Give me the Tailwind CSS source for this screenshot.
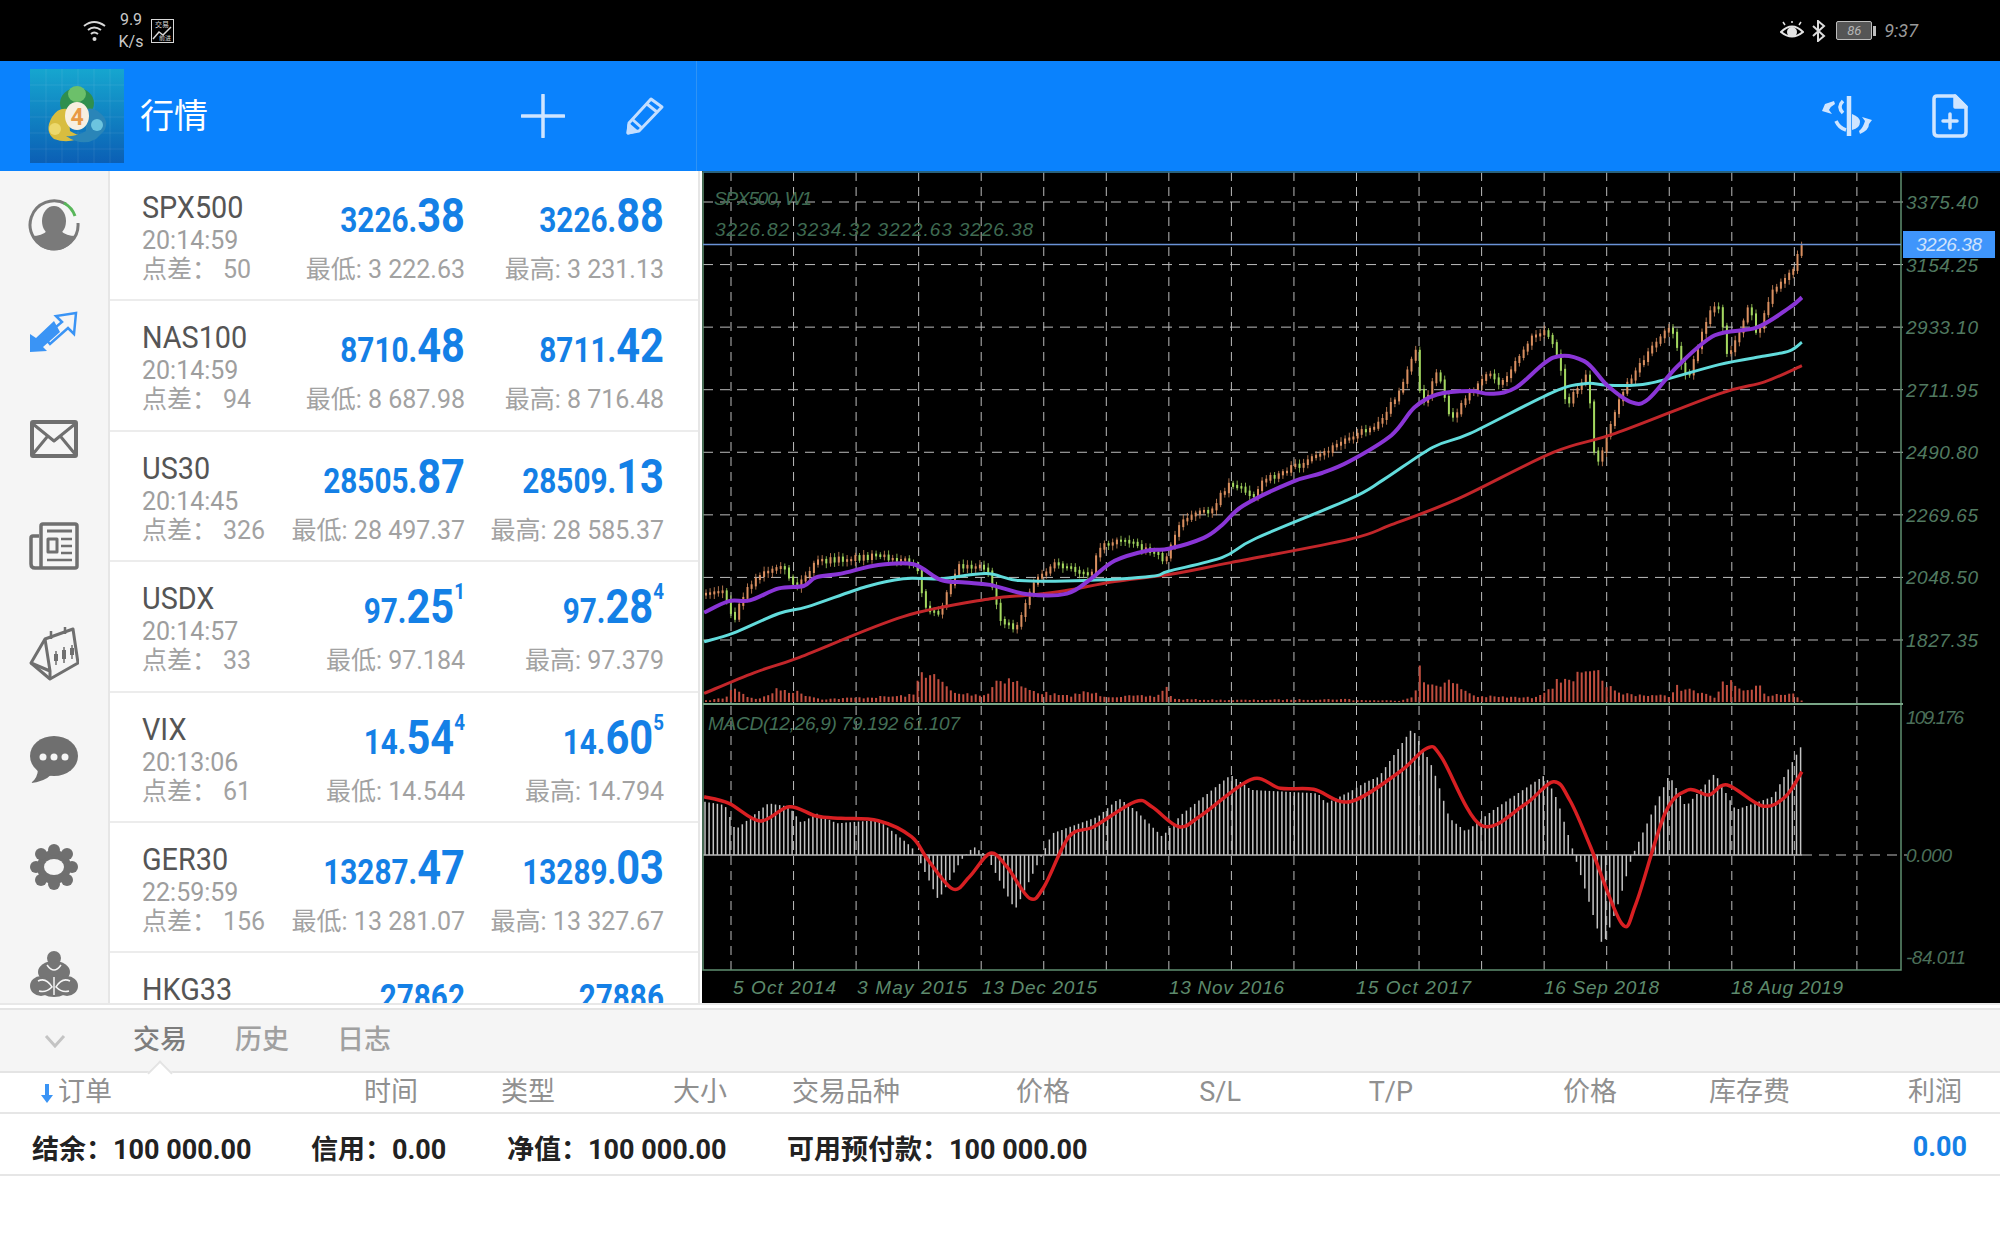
<!DOCTYPE html>
<html lang="zh-CN">
<head>
    <meta charset="UTF-8">
    <meta name="viewport" content="width=device-width, initial-scale=1.0">
    <title>MetaTrader 4 行情</title>
    <script src="https://cdn.jsdelivr.net/npm/@tailwindcss/browser@4"></script>
</head>
<body class="w-[2000px] h-[1250px] overflow-hidden bg-white font-[Roboto,'Noto_Sans_CJK_SC',sans-serif]">

    <!-- Status bar -->
    <div class="h-[61px] bg-black flex items-center text-[#c9c9c9] relative">
        <div class="flex items-center pl-[83px]">
            <svg width="26" height="24" viewBox="0 0 26 24" fill="none" stroke="#d8d8d8" stroke-width="2">
                <path d="M1 7 Q11 -1 22 7"/><path d="M5 11 Q11 6 18 11"/><path d="M8 15 Q11 12 15 15"/>
                <circle cx="11.500" cy="20" r="2" fill="#d8d8d8" stroke="none"/>
            </svg>
            <div class="w-[30px] ml-[7px] text-[16px] leading-[22px] text-center"><div>9.9</div><div>K/s</div></div>
            <svg class="ml-[5px]" width="23" height="24" viewBox="0 0 23 24" fill="none" stroke="#d8d8d8">
                <rect x="0.500" y="0.500" width="22" height="23"/>
                <text x="11" y="8" font-size="7" fill="#d8d8d8" stroke="none" text-anchor="middle">交易</text>
                <path d="M2 20 L8 13 L12 16 L20 8" stroke-width="1.500"/>
                <text x="14" y="21" font-size="6" fill="#d8d8d8" stroke="none" text-anchor="middle">前进</text>
            </svg>
        </div>
        <div class="ml-auto flex items-center pr-[82px]">
            <svg width="24" height="20" viewBox="0 0 24 20" fill="none" stroke="#e4e4e4" stroke-width="2">
                <path d="M1 11 Q12 0 23 11 Q12 20 1 11Z"/><circle cx="12" cy="11" r="4" fill="#e4e4e4"/>
                <path d="M5 4 L3 1 M12 2 V0 M19 4 L21 1" stroke-width="1.500"/>
            </svg>
            <svg class="ml-[8px]" width="14" height="22" viewBox="0 0 14 22" fill="none" stroke="#dcdcdc" stroke-width="2">
                <path d="M1 6 L12 16 L6 21 V1 L12 6 L1 16"/>
            </svg>
            <div class="ml-[10px] w-[36px] h-[19px] border border-[#bdbdbd] rounded-[2px] bg-[#555] text-[13px] leading-[17px] italic text-center text-[#b5b5b5]">86</div>
            <div class="w-[3px] h-[10px] bg-[#bdbdbd] ml-[1px]"></div>
            <div class="ml-[8px] text-[18px] italic text-[#9a9a9a]">9:37</div>
        </div>
    </div>

    <!-- Title bar -->
    <div class="h-[110px] bg-[#0a82fd] flex items-center">
        <div class="w-[697px] h-full flex items-center border-r border-[#2f93f5]">
            <svg class="ml-[30px]" width="94" height="94" viewBox="0 0 94 94">
                <defs>
                    <linearGradient id="tile" x1="0" y1="0" x2="0" y2="1">
                        <stop offset="0" stop-color="#16a6cf"/><stop offset="1" stop-color="#0b5fb5"/>
                    </linearGradient>
                </defs>
                <rect width="94" height="94" fill="url(#tile)"/>
                <path d="M16 0V94M32 0V94M48 0V94M64 0V94M80 0V94M0 16H94M0 32H94M0 48H94M0 64H94M0 80H94" stroke="#ffffff" stroke-opacity=".08"/>
                <ellipse cx="47" cy="34" rx="17" ry="15" fill="#2f8f4e"/>
                <ellipse cx="47" cy="25" rx="9" ry="8" fill="#6cc06a"/>
                <path d="M24 70 Q14 62 22 48 Q28 38 38 40 L40 62 Q50 68 56 66 Q40 76 24 70Z" fill="#d8bd3f"/>
                <circle cx="25" cy="60" r="6" fill="#ecd86c"/>
                <path d="M74 62 Q80 52 70 44 Q64 38 56 40 L56 62 Q46 68 36 67 Q52 78 66 70Z" fill="#2a85b8"/>
                <circle cx="67" cy="56" r="6" fill="#6cc4df"/>
                <ellipse cx="47" cy="47" rx="12" ry="14" fill="#f7efe0"/>
                <text x="47" y="56" font-size="23" font-weight="700" fill="#e89a45" text-anchor="middle">4</text>
            </svg>
            <div class="ml-[16px] text-[34px] text-white">行情</div>
            <svg class="ml-auto" width="44" height="44" viewBox="0 0 44 44" stroke="#cfe5ff" stroke-width="3.500" stroke-linecap="round">
                <path d="M22 1V43M1 22H43"/>
            </svg>
            <svg class="ml-[60px] mr-[31px]" width="40" height="40" viewBox="0 0 40 40" fill="none" stroke="#c3deff" stroke-width="3" stroke-linejoin="round">
                <path d="M3 37 L4 27 L26 3 L37 11 L14 35 Z"/><path d="M8 24 L17 32 M22 8 L32 16"/>
                <path d="M3 37 L4 29 L11 35 Z" fill="#c3deff"/>
            </svg>
        </div>
        <div class="ml-auto flex items-center pr-[32px]">
            <svg width="52" height="40" viewBox="0 0 52 40" fill="none" stroke="#cfe5ff" stroke-width="4">
                <path d="M28 0V40" stroke-width="4.500"/>
                <path d="M22 5 Q16 11 22 17 M15 25 Q18 32 25 34" stroke-width="3.500"/>
                <path d="M31 18 Q39 21 39 26 Q39 32 31 34Z" fill="#cfe5ff" stroke="none"/>
                <path d="M1 15 L11 18 L8 14 Q10 10 14 8 L13 5 L4 8 Z" fill="#cfe5ff" stroke="none"/>
                <path d="M51 24 L41 21 L44 25 Q42 32 38 35 L39 38 Q48 34 48 28 Z" fill="#cfe5ff" stroke="none"/>
            </svg>
            <svg class="ml-[59px]" width="36" height="44" viewBox="0 0 36 44" fill="none" stroke="#cfe5ff" stroke-width="3.500" stroke-linejoin="round">
                <path d="M5 2 H23 L34 13 V38 Q34 42 30 42 H6 Q2 42 2 38 V5 Q2 2 5 2Z"/>
                <path d="M23 2 V13 H34Z" fill="#cfe5ff"/>
                <path d="M18 20 V34 M11 27 H25" stroke-linecap="round"/>
            </svg>
        </div>
    </div>

    <!-- Main: sidebar, quote list, chart -->
    <div class="flex h-[832px]">
        <div class="w-[110px] bg-[#f5f5f5] border-r-2 border-[#e6e6e6] flex flex-col items-center overflow-hidden shrink-0">
            <div class="h-[107px] shrink-0 flex items-center">
                <svg width="52" height="52" viewBox="0 0 52 52" fill="none" stroke="#7a7a7a" stroke-width="3">
                    <path d="M38 5 A24 24 0 1 0 50 24"/>
                    <path d="M36 4 A24 24 0 0 1 47 17" stroke="#58b65a"/>
                    <ellipse cx="26" cy="22" rx="12" ry="15" fill="#7a7a7a" stroke="none"/>
                    <path d="M4 37 Q14 37 19 32 H33 Q38 37 48 37 A24 24 0 0 1 4 37Z" fill="#7a7a7a" stroke="none"/>
                </svg>
            </div>
            <div class="h-[107px] shrink-0 flex items-center">
                <svg width="48" height="42" viewBox="0 0 48 42">
                    <path d="M0 41 V23 L6 27 L24 10 L30 21 L13 36 L17 40Z" fill="#3a94f5"/>
                    <path d="M46 2 L26 5 L32 11 L14 26 L20 33 L38 17 L44 23Z" fill="none" stroke="#3a94f5" stroke-width="2.500"/>
                </svg>
            </div>
            <div class="h-[107px] shrink-0 flex items-center">
                <svg width="48" height="38" viewBox="0 0 48 38" fill="none" stroke="#6f6f6f" stroke-width="4" stroke-linejoin="round">
                    <rect x="2" y="2" width="44" height="34" rx="1"/>
                    <path d="M3 4 L24 21 L45 4 M3 34 L17 17 M45 34 L31 17" stroke-width="3"/>
                </svg>
            </div>
            <div class="h-[107px] shrink-0 flex items-center">
                <svg width="50" height="48" viewBox="0 0 50 48" fill="none" stroke="#6f6f6f" stroke-width="3.500" stroke-linejoin="round">
                    <path d="M10 14 H4 Q2 14 2 16 V42 Q2 46 6 46 H46 Q48 46 48 44 V4 Q48 2 46 2 H14 Q12 2 12 4 V46"/>
                    <path d="M18 9 H43" stroke-width="3"/>
                    <rect x="19" y="17" width="9" height="13" stroke-width="3"/>
                    <path d="M32 17 H43 M32 24 H43 M32 31 H43 M18 38 H43" stroke-width="2.500"/>
                </svg>
            </div>
            <div class="h-[107px] shrink-0 flex items-center">
                <svg width="50" height="56" viewBox="0 0 50 56" fill="none" stroke="#6f6f6f" stroke-width="3" stroke-linejoin="round">
                    <path d="M2 38 L16 14 L44 4 L49 38 L21 54Z"/>
                    <path d="M2 38 L21 46 L16 14 M21 46 L21 54"/>
                    <path d="M22 6 V14 M36 2 V9" stroke-width="2.500"/>
                    <path d="M27 26 V40 M35 22 V38 M43 20 V34" stroke-width="1.500"/>
                    <rect x="25" y="29" width="4" height="7" fill="#6f6f6f" stroke="none"/>
                    <rect x="33" y="25" width="4" height="9" fill="#6f6f6f" stroke="none"/>
                    <rect x="41" y="23" width="4" height="7" fill="#6f6f6f" stroke="none"/>
                </svg>
            </div>
            <div class="h-[107px] shrink-0 flex items-center">
                <svg width="48" height="48" viewBox="0 0 48 48">
                    <ellipse cx="24" cy="20" rx="24" ry="20" fill="#6f6f6f"/>
                    <path d="M8 32 Q8 42 1 47 Q14 46 22 38Z" fill="#6f6f6f"/>
                    <circle cx="13" cy="21" r="3.500" fill="#f5f5f5"/><circle cx="24" cy="21" r="3.500" fill="#f5f5f5"/><circle cx="35" cy="21" r="3.500" fill="#f5f5f5"/>
                </svg>
            </div>
            <div class="h-[107px] shrink-0 flex items-center">
                <svg width="48" height="46" viewBox="0 0 48 46" fill="#6f6f6f">
                    <circle cx="24" cy="23" r="17"/>
                    <circle cx="24" cy="6" r="6"/><circle cx="24" cy="40" r="6"/><circle cx="6" cy="23" r="6"/><circle cx="42" cy="23" r="6"/>
                    <circle cx="11" cy="10" r="6"/><circle cx="37" cy="10" r="6"/><circle cx="11" cy="36" r="6"/><circle cx="37" cy="36" r="6"/>
                    <ellipse cx="24" cy="23" rx="10" ry="8" fill="#f5f5f5"/>
                </svg>
            </div>
            <div class="h-[107px] shrink-0 flex items-center">
                <svg width="48" height="46" viewBox="0 0 48 46">
                    <circle cx="24" cy="7" r="7" fill="#757575"/>
                    <ellipse cx="24" cy="21" rx="16" ry="11" fill="#757575"/>
                    <ellipse cx="11" cy="35" rx="11" ry="10" fill="#757575"/>
                    <ellipse cx="37" cy="35" rx="11" ry="10" fill="#757575"/>
                    <ellipse cx="24" cy="38" rx="14" ry="8" fill="#757575"/>
                    <path d="M17 14 Q24 24 31 14 M8 30 Q16 26 22 36 Q16 42 9 40 M40 30 Q32 26 26 36 Q32 42 39 40 M24 26 V44" fill="none" stroke="#f5f5f5" stroke-width="1.500"/>
                </svg>
            </div>
        </div>

        <!-- Quote list -->
        <div class="w-[590px] shrink-0 border-r-2 border-[#e6e6e6] overflow-hidden bg-white whitespace-nowrap">
            <div class="flex h-[130.400px] border-b-2 border-[#ececec] pl-8 pr-[34px]">
                <div class="w-[100px] shrink-0">
                    <div class="pt-[18px] text-[32px] leading-[36px] text-[#555] origin-left scale-x-[.9]">SPX500</div>
                    <div class="text-[25px] leading-[31px] text-[#9e9e9e]">20:14:59</div>
                    <div class="flex text-[25px] leading-[28px] text-[#a2a2a2]"><span class="w-[81px] shrink-0">点差：</span><span>50</span></div>
                </div>
                <div class="flex-1">
                    <div class="pt-[20px] h-[70px] flex items-baseline justify-end origin-right scale-x-[.85] font-bold text-[#1480e6]"><span class="text-[35px] leading-[50px]">3226.</span><span class="text-[49px] leading-[50px]">38</span></div>
                    <div class="mt-[14px] text-right text-[25px] leading-[29px] text-[#a2a2a2]">最低: 3 222.63</div>
                </div>
                <div class="w-[199px] shrink-0">
                    <div class="pt-[20px] h-[70px] flex items-baseline justify-end origin-right scale-x-[.85] font-bold text-[#1480e6]"><span class="text-[35px] leading-[50px]">3226.</span><span class="text-[49px] leading-[50px]">88</span></div>
                    <div class="mt-[14px] text-right text-[25px] leading-[29px] text-[#a2a2a2]">最高: 3 231.13</div>
                </div>
            </div>
            <div class="flex h-[130.400px] border-b-2 border-[#ececec] pl-8 pr-[34px]">
                <div class="w-[100px] shrink-0">
                    <div class="pt-[18px] text-[32px] leading-[36px] text-[#555] origin-left scale-x-[.9]">NAS100</div>
                    <div class="text-[25px] leading-[31px] text-[#9e9e9e]">20:14:59</div>
                    <div class="flex text-[25px] leading-[28px] text-[#a2a2a2]"><span class="w-[81px] shrink-0">点差：</span><span>94</span></div>
                </div>
                <div class="flex-1">
                    <div class="pt-[20px] h-[70px] flex items-baseline justify-end origin-right scale-x-[.85] font-bold text-[#1480e6]"><span class="text-[35px] leading-[50px]">8710.</span><span class="text-[49px] leading-[50px]">48</span></div>
                    <div class="mt-[14px] text-right text-[25px] leading-[29px] text-[#a2a2a2]">最低: 8 687.98</div>
                </div>
                <div class="w-[199px] shrink-0">
                    <div class="pt-[20px] h-[70px] flex items-baseline justify-end origin-right scale-x-[.85] font-bold text-[#1480e6]"><span class="text-[35px] leading-[50px]">8711.</span><span class="text-[49px] leading-[50px]">42</span></div>
                    <div class="mt-[14px] text-right text-[25px] leading-[29px] text-[#a2a2a2]">最高: 8 716.48</div>
                </div>
            </div>
            <div class="flex h-[130.400px] border-b-2 border-[#ececec] pl-8 pr-[34px]">
                <div class="w-[100px] shrink-0">
                    <div class="pt-[18px] text-[32px] leading-[36px] text-[#555] origin-left scale-x-[.9]">US30</div>
                    <div class="text-[25px] leading-[31px] text-[#9e9e9e]">20:14:45</div>
                    <div class="flex text-[25px] leading-[28px] text-[#a2a2a2]"><span class="w-[81px] shrink-0">点差：</span><span>326</span></div>
                </div>
                <div class="flex-1">
                    <div class="pt-[20px] h-[70px] flex items-baseline justify-end origin-right scale-x-[.85] font-bold text-[#1480e6]"><span class="text-[35px] leading-[50px]">28505.</span><span class="text-[49px] leading-[50px]">87</span></div>
                    <div class="mt-[14px] text-right text-[25px] leading-[29px] text-[#a2a2a2]">最低: 28 497.37</div>
                </div>
                <div class="w-[199px] shrink-0">
                    <div class="pt-[20px] h-[70px] flex items-baseline justify-end origin-right scale-x-[.85] font-bold text-[#1480e6]"><span class="text-[35px] leading-[50px]">28509.</span><span class="text-[49px] leading-[50px]">13</span></div>
                    <div class="mt-[14px] text-right text-[25px] leading-[29px] text-[#a2a2a2]">最高: 28 585.37</div>
                </div>
            </div>
            <div class="flex h-[130.400px] border-b-2 border-[#ececec] pl-8 pr-[34px]">
                <div class="w-[100px] shrink-0">
                    <div class="pt-[18px] text-[32px] leading-[36px] text-[#555] origin-left scale-x-[.9]">USDX</div>
                    <div class="text-[25px] leading-[31px] text-[#9e9e9e]">20:14:57</div>
                    <div class="flex text-[25px] leading-[28px] text-[#a2a2a2]"><span class="w-[81px] shrink-0">点差：</span><span>33</span></div>
                </div>
                <div class="flex-1">
                    <div class="pt-[20px] h-[70px] flex items-baseline justify-end origin-right scale-x-[.85] font-bold text-[#1480e6]"><span class="text-[35px] leading-[50px]">97.</span><span class="text-[49px] leading-[50px]">25</span><span class="text-[22px] leading-[50px] relative -top-[24px]">1</span></div>
                    <div class="mt-[14px] text-right text-[25px] leading-[29px] text-[#a2a2a2]">最低: 97.184</div>
                </div>
                <div class="w-[199px] shrink-0">
                    <div class="pt-[20px] h-[70px] flex items-baseline justify-end origin-right scale-x-[.85] font-bold text-[#1480e6]"><span class="text-[35px] leading-[50px]">97.</span><span class="text-[49px] leading-[50px]">28</span><span class="text-[22px] leading-[50px] relative -top-[24px]">4</span></div>
                    <div class="mt-[14px] text-right text-[25px] leading-[29px] text-[#a2a2a2]">最高: 97.379</div>
                </div>
            </div>
            <div class="flex h-[130.400px] border-b-2 border-[#ececec] pl-8 pr-[34px]">
                <div class="w-[100px] shrink-0">
                    <div class="pt-[18px] text-[32px] leading-[36px] text-[#555] origin-left scale-x-[.9]">VIX</div>
                    <div class="text-[25px] leading-[31px] text-[#9e9e9e]">20:13:06</div>
                    <div class="flex text-[25px] leading-[28px] text-[#a2a2a2]"><span class="w-[81px] shrink-0">点差：</span><span>61</span></div>
                </div>
                <div class="flex-1">
                    <div class="pt-[20px] h-[70px] flex items-baseline justify-end origin-right scale-x-[.85] font-bold text-[#1480e6]"><span class="text-[35px] leading-[50px]">14.</span><span class="text-[49px] leading-[50px]">54</span><span class="text-[22px] leading-[50px] relative -top-[24px]">4</span></div>
                    <div class="mt-[14px] text-right text-[25px] leading-[29px] text-[#a2a2a2]">最低: 14.544</div>
                </div>
                <div class="w-[199px] shrink-0">
                    <div class="pt-[20px] h-[70px] flex items-baseline justify-end origin-right scale-x-[.85] font-bold text-[#1480e6]"><span class="text-[35px] leading-[50px]">14.</span><span class="text-[49px] leading-[50px]">60</span><span class="text-[22px] leading-[50px] relative -top-[24px]">5</span></div>
                    <div class="mt-[14px] text-right text-[25px] leading-[29px] text-[#a2a2a2]">最高: 14.794</div>
                </div>
            </div>
            <div class="flex h-[130.400px] border-b-2 border-[#ececec] pl-8 pr-[34px]">
                <div class="w-[100px] shrink-0">
                    <div class="pt-[18px] text-[32px] leading-[36px] text-[#555] origin-left scale-x-[.9]">GER30</div>
                    <div class="text-[25px] leading-[31px] text-[#9e9e9e]">22:59:59</div>
                    <div class="flex text-[25px] leading-[28px] text-[#a2a2a2]"><span class="w-[81px] shrink-0">点差：</span><span>156</span></div>
                </div>
                <div class="flex-1">
                    <div class="pt-[20px] h-[70px] flex items-baseline justify-end origin-right scale-x-[.85] font-bold text-[#1480e6]"><span class="text-[35px] leading-[50px]">13287.</span><span class="text-[49px] leading-[50px]">47</span></div>
                    <div class="mt-[14px] text-right text-[25px] leading-[29px] text-[#a2a2a2]">最低: 13 281.07</div>
                </div>
                <div class="w-[199px] shrink-0">
                    <div class="pt-[20px] h-[70px] flex items-baseline justify-end origin-right scale-x-[.85] font-bold text-[#1480e6]"><span class="text-[35px] leading-[50px]">13289.</span><span class="text-[49px] leading-[50px]">03</span></div>
                    <div class="mt-[14px] text-right text-[25px] leading-[29px] text-[#a2a2a2]">最高: 13 327.67</div>
                </div>
            </div>
            <div class="flex h-[130.400px] pl-8 pr-[34px]">
                <div class="w-[100px] shrink-0">
                    <div class="pt-[18px] text-[32px] leading-[36px] text-[#555] origin-left scale-x-[.9]">HKG33</div>
                </div>
                <div class="flex-1">
                    <div class="pt-[20px] h-[70px] flex items-baseline justify-end origin-right scale-x-[.85] font-bold text-[#1480e6]"><span class="text-[35px] leading-[50px]">27862</span></div>
                </div>
                <div class="w-[199px] shrink-0">
                    <div class="pt-[20px] h-[70px] flex items-baseline justify-end origin-right scale-x-[.85] font-bold text-[#1480e6]"><span class="text-[35px] leading-[50px]">27886</span></div>
                </div>
            </div>
        </div>

        <!-- Chart -->
        <div class="ml-[2px] w-[1298px] h-[832px] bg-black">
            <svg id="chart" class="block whitespace-pre" width="1298" height="832" viewBox="702 171 1298 832"></svg>
        </div>
    </div>

    <!-- Terminal panel -->
    <div class="h-[5px] border-t-2 border-[#e8e8e8]"></div>
    <div class="relative h-[65px] bg-[#f5f5f5] border-y-2 border-[#e4e4e4] flex items-center text-[27px] font-medium text-[#a0a0a0]">
        <svg class="ml-[44px]" width="22" height="14" viewBox="0 0 22 14" fill="none" stroke="#c4c4c4" stroke-width="3">
            <path d="M2 2 L11 12 L20 2"/>
        </svg>
        <span class="ml-[67px] text-[#7d7d7d]">交易</span>
        <span class="ml-[48px]">历史</span>
        <span class="ml-[48px]">日志</span>
        <div class="absolute left-[151px] -bottom-[11px] w-[18px] h-[18px] rotate-45 bg-white border-l-2 border-t-2 border-[#e4e4e4]"></div>
    </div>
    <div class="flex h-[41px] items-center border-b-2 border-[#e6e6e6] text-[27px] text-[#909090]">
        <div class="w-[112px] text-right flex justify-end items-center">
            <svg class="mr-[5px]" width="12" height="20" viewBox="0 0 12 20" fill="#3a94f5"><path d="M4 1H8V12H12L6 20L0 12H4Z"/></svg>
            <span>订单</span>
        </div>
        <div class="w-[306px] text-right">时间</div>
        <div class="w-[137px] text-right">类型</div>
        <div class="w-[172px] text-right">大小</div>
        <div class="w-[173px] text-right">交易品种</div>
        <div class="w-[170px] text-right">价格</div>
        <div class="w-[171px] text-right">S/L</div>
        <div class="w-[172px] text-right">T/P</div>
        <div class="w-[204px] text-right">价格</div>
        <div class="w-[173px] text-right">库存费</div>
        <div class="w-[172px] text-right">利润</div>
    </div>
    <div class="flex h-[62px] items-center border-b-2 border-[#e6e6e6] pl-[32px] pt-[12px] text-[27px] font-bold text-[#222]">
        <span class="w-[279px]">结余：100 000.00</span>
        <span class="w-[196px]">信用：0.00</span>
        <span class="w-[280px]">净值：100 000.00</span>
        <span>可用预付款：100 000.00</span>
        <span class="ml-auto pr-[33px] text-[#1480e6] -mt-[6px]">0.00</span>
    </div>

    <script>
        // chart data, traced off the picture. x/y come in zoom coordinates per segment
        const left = (p, sy, oy) => p.map(([x, y]) => [700 + x / 2.412, oy + y / sy]);
        const right = (p, sy, oy) => p.map(([x, y]) => [1350 + x / 2.412, oy + y / sy]);
        const top2 = (a, b) => left(a, 2.904, 170).concat(right(b, 2.904, 170));
        const low2 = (a, b) => left(a, 3, 690).concat(right(b, 3, 690));

        const purple = top2(
            [[10,1285],[70,1252],[120,1250],[190,1215],[250,1208],[280,1183],[340,1172],[430,1147],[515,1145],[580,1190],[640,1198],[700,1205],[790,1232],[885,1230],[940,1190],[1000,1135],[1080,1105],[1130,1100],[1215,1068],[1260,1030],[1310,975],[1430,905],[1500,880]],
            [[0,845],[100,770],[155,690],[210,652],[290,642],[340,650],[400,632],[490,545],[565,555],[620,625],[680,675],[720,665],[790,570],[880,480],[980,458],[1060,400],[1090,370]]);
        const cyan = top2(
            [[10,1370],[80,1345],[190,1288],[260,1268],[400,1210],[490,1187],[580,1187],[690,1172],[770,1192],[930,1192],[1090,1180],[1130,1165],[1260,1125],[1340,1070]],
            [[0,955],[80,900],[200,805],[290,765],[490,645],[570,620],[620,625],[720,620],[890,565],[1000,540],[1060,525],[1090,500]]);
        const red = top2(
            [[10,1520],[130,1460],[240,1415],[490,1297],[700,1245],[790,1235],[880,1222],[1000,1195],[1130,1175],[1280,1140]],
            [[0,1072],[100,1030],[260,955],[490,820],[640,765],[890,650],[1000,615],[1090,568]]);
        const price = top2(
            [[10,1230],[50,1215],[80,1300],[110,1210],[150,1170],[200,1155],[230,1210],[280,1135],[400,1120],[480,1125],[520,1150],[540,1270],[575,1280],[620,1145],[690,1150],[720,1300],[760,1330],[800,1200],[850,1145],[940,1170],[965,1085],[1030,1070],[1120,1130],[1160,1010],[1230,985],[1275,905],[1340,945],[1350,905],[1420,865],[1490,830]],
            [[0,770],[60,740],[120,640],[155,510],[170,690],[210,580],[240,730],[290,640],[330,585],[360,620],[440,480],[470,465],[500,540],[520,680],[570,590],[590,870],[610,800],[650,650],[700,555],[770,450],[810,610],[870,390],[890,400],[910,550],[960,390],[980,480],[1020,340],[1070,280],[1085,215]]);
        const signal = low2(
            [[10,320],[70,340],[145,393],[215,350],[280,378],[340,385],[430,392],[510,440],[550,510],[610,597],[650,560],[700,490],[740,530],[795,625],[830,590],[890,440],[950,410],[1050,335],[1090,350],[1155,410],[1210,375],[1330,268],[1400,295],[1480,298]],
            [[0,335],[120,245],[185,175],[220,200],[315,405],[420,345],[490,275],[530,330],[580,470],[655,700],[690,640],[760,370],[815,300],[865,315],[910,285],[995,348],[1050,320],[1090,245]]);
        const hist = low2(
            [[10,335],[60,345],[85,420],[110,395],[165,340],[215,350],[245,400],[280,370],[330,400],[430,390],[510,470],[525,500],[575,630],[630,510],[660,470],[690,495],[760,660],[825,495],[850,430],[960,380],[1010,325],[1050,360],[1115,440],[1160,375],[1280,255],[1330,300],[1490,310],[1510,340]],
            [[0,305],[40,275],[70,260],[150,115],[200,235],[240,385],[280,425],[340,365],[470,255],[500,330],[540,490],[610,770],[650,630],[680,500],[770,255],[810,350],[880,250],[930,360],[1020,320],[1090,165]]);
        const volPeaks = top2(
            [[10,1540],[60,1530],[80,1490],[110,1525],[140,1535],[188,1500],[230,1510],[290,1535],[470,1525],[515,1520],[530,1430],[575,1470],[610,1515],[690,1520],[715,1465],[750,1465],[790,1505],[880,1525],[930,1510],[980,1525],[1100,1525],[1120,1490],[1140,1535],[1280,1538],[1568,1535]],
            [[0,1538],[120,1540],[155,1520],[165,1400],[175,1485],[240,1475],[300,1525],[440,1530],[515,1460],[595,1450],[640,1515],[770,1525],[780,1490],[880,1530],[900,1462],[950,1515],[985,1490],[1005,1522],[1065,1510],[1085,1540]]);

        const at = (pts, x) => {
            if (x <= pts[0][0]) return pts[0][1];
            for (let i = 1; i < pts.length; i++) {
                if (x <= pts[i][0]) {
                    const t = (x - pts[i - 1][0]) / (pts[i][0] - pts[i - 1][0]);
                    return pts[i - 1][1] + t * (pts[i][1] - pts[i - 1][1]);
                }
            }
            return pts[pts.length - 1][1];
        };
        let seed = 7;
        const rnd = () => (seed = (seed * 16807) % 2147483647) / 2147483647;
        // catmull-rom through the traced points, the real curves have no corners
        const curve = pts => {
            let d = `M${pts[0][0].toFixed(1)} ${pts[0][1].toFixed(1)}`;
            for (let i = 0; i < pts.length - 1; i++) {
                const p0 = pts[Math.max(i - 1, 0)], p1 = pts[i], p2 = pts[i + 1], p3 = pts[Math.min(i + 2, pts.length - 1)];
                const c1 = [p1[0] + (p2[0] - p0[0]) / 6, p1[1] + (p2[1] - p0[1]) / 6];
                const c2 = [p2[0] - (p3[0] - p1[0]) / 6, p2[1] - (p3[1] - p1[1]) / 6];
                d += `C${c1[0].toFixed(1)} ${c1[1].toFixed(1)} ${c2[0].toFixed(1)} ${c2[1].toFixed(1)} ${p2[0].toFixed(1)} ${p2[1].toFixed(1)}`;
            }
            return d;
        };

        let s = '';
        const grid = '#bcbcbc', axis = '#5f8f70', label = '#517a60';

        // grid
        for (let i = 0; i < 19; i++) {
            const x = 731 + i * 62.55;
            s += `<path d="M${x} 172V703" stroke="${grid}" stroke-dasharray="9 6"/>`;
            s += `<path d="M${x} 706V970" stroke="${grid}" stroke-dasharray="9 6"/>`;
        }
        const prices = ['3375.40', '3154.25', '2933.10', '2711.95', '2490.80', '2269.65', '2048.50', '1827.35'];
        prices.forEach((p, i) => {
            const y = 202 + i * 62.57;
            s += `<path d="M703 ${y}H1907" stroke="${grid}" stroke-dasharray="10 7"/>`;
            s += `<text x="1906" y="${y + 7}" textLength="72" font-size="19" font-style="italic" fill="${label}" font-family="Liberation Sans">${p}</text>`;
        });
        s += `<path d="M1802 855H1907" stroke="${grid}" stroke-dasharray="10 7"/>`;

        // volumes
        for (let x = 705; x < 1802; x += 4.15) {
            const base = at(volPeaks, x);
            const y = Math.min(702, base + rnd() * (702 - base) * 0.35);
            s += `<rect x="${x.toFixed(1)}" y="${y.toFixed(1)}" width="2" height="${(702 - y).toFixed(1)}" fill="#c04e3f"/>`;
        }

        // candles
        let prev = at(price, 703);
        for (let x = 705; x < 1802; x += 4.15) {
            const y = at(price, x) + (rnd() - 0.5) * 5;
            const up = y <= prev;
            const a = Math.min(y, prev), b = Math.max(y, prev) + 2;
            const c = up ? '#d98f60' : '#a4d860';
            s += `<path d="M${(x + 1).toFixed(1)} ${(a - 2 - rnd() * 3).toFixed(1)}V${(b + 2 + rnd() * 3).toFixed(1)}" stroke="${c}" stroke-width=".8"/>`;
            s += `<rect x="${x.toFixed(1)}" y="${a.toFixed(1)}" width="2" height="${(b - a).toFixed(1)}" fill="${c}"/>`;
            prev = y;
        }

        s += `<path d="${curve(red)}" fill="none" stroke="#c2262a" stroke-width="3"/>`;
        s += `<path d="${curve(cyan)}" fill="none" stroke="#62dcdc" stroke-width="3"/>`;
        s += `<path d="${curve(purple)}" fill="none" stroke="#8a35d6" stroke-width="4"/>`;

        // macd
        for (let x = 705; x < 1803; x += 4.15) {
            const y = at(hist, x);
            s += `<path d="M${x.toFixed(1)} 855V${y.toFixed(1)}" stroke="#c4c4c4" stroke-width="1.500"/>`;
        }
        s += `<path d="M703 855H1802" stroke="#b8b8b8" stroke-width="1.500"/>`;
        s += `<path d="${curve(signal)}" fill="none" stroke="#d81f22" stroke-width="3.500"/>`;

        // frame
        s += `<path d="M703 172H1901V970H703Z" fill="none" stroke="${axis}" stroke-width="1.500"/>`;
        s += `<path d="M703 172H2000" stroke="#0d5aa5" stroke-width="1" />`;
        s += `<path d="M703 704H1903" stroke="#79a687" stroke-width="2"/>`;
        s += `<path d="M703 244.500H1901" stroke="#6a92d6" stroke-width="1.500"/>`;

        // current price box
        s += `<rect x="1903" y="231" width="92" height="27" fill="#3f95fb"/>`;
        s += `<text x="1916" y="251" textLength="66" font-size="19" font-style="italic" fill="#cfe3fb" font-family="Liberation Sans">3226.38</text>`;

        // labels
        const t = (x, y, w, str, fill) => `<text x="${x}" y="${y}" textLength="${w}" font-size="19" font-style="italic" fill="${fill || label}" font-family="Liberation Sans">${str}</text>`;
        s += t(714, 205, 98, 'SPX500, W1', '#3f6b52');
        s += t(715, 236, 318, '3226.82  3234.32  3222.63  3226.38', '#3f6b52');
        s += t(708, 730, 252, 'MACD(12,26,9)  79.192  61.107', '#436f57');
        s += t(1906, 724, 58, '109.176', '#4b6f59');
        s += t(1906, 862, 46, '0.000', '#4b6f59');
        s += t(1906, 964, 60, '-84.011', '#4b6f59');
        [[733, 103, '5 Oct  2014'], [857, 110, '3 May  2015'], [982, 115, '13 Dec  2015'], [1169, 115, '13 Nov  2016'], [1356, 115, '15 Oct  2017'], [1544, 115, '16 Sep  2018'], [1731, 112, '18 Aug  2019']].forEach(d => {
            s += t(d[0], 994, d[1], d[2], '#5d8a6c');
        });

        document.getElementById('chart').innerHTML = s;
    </script>
</body>
</html>
